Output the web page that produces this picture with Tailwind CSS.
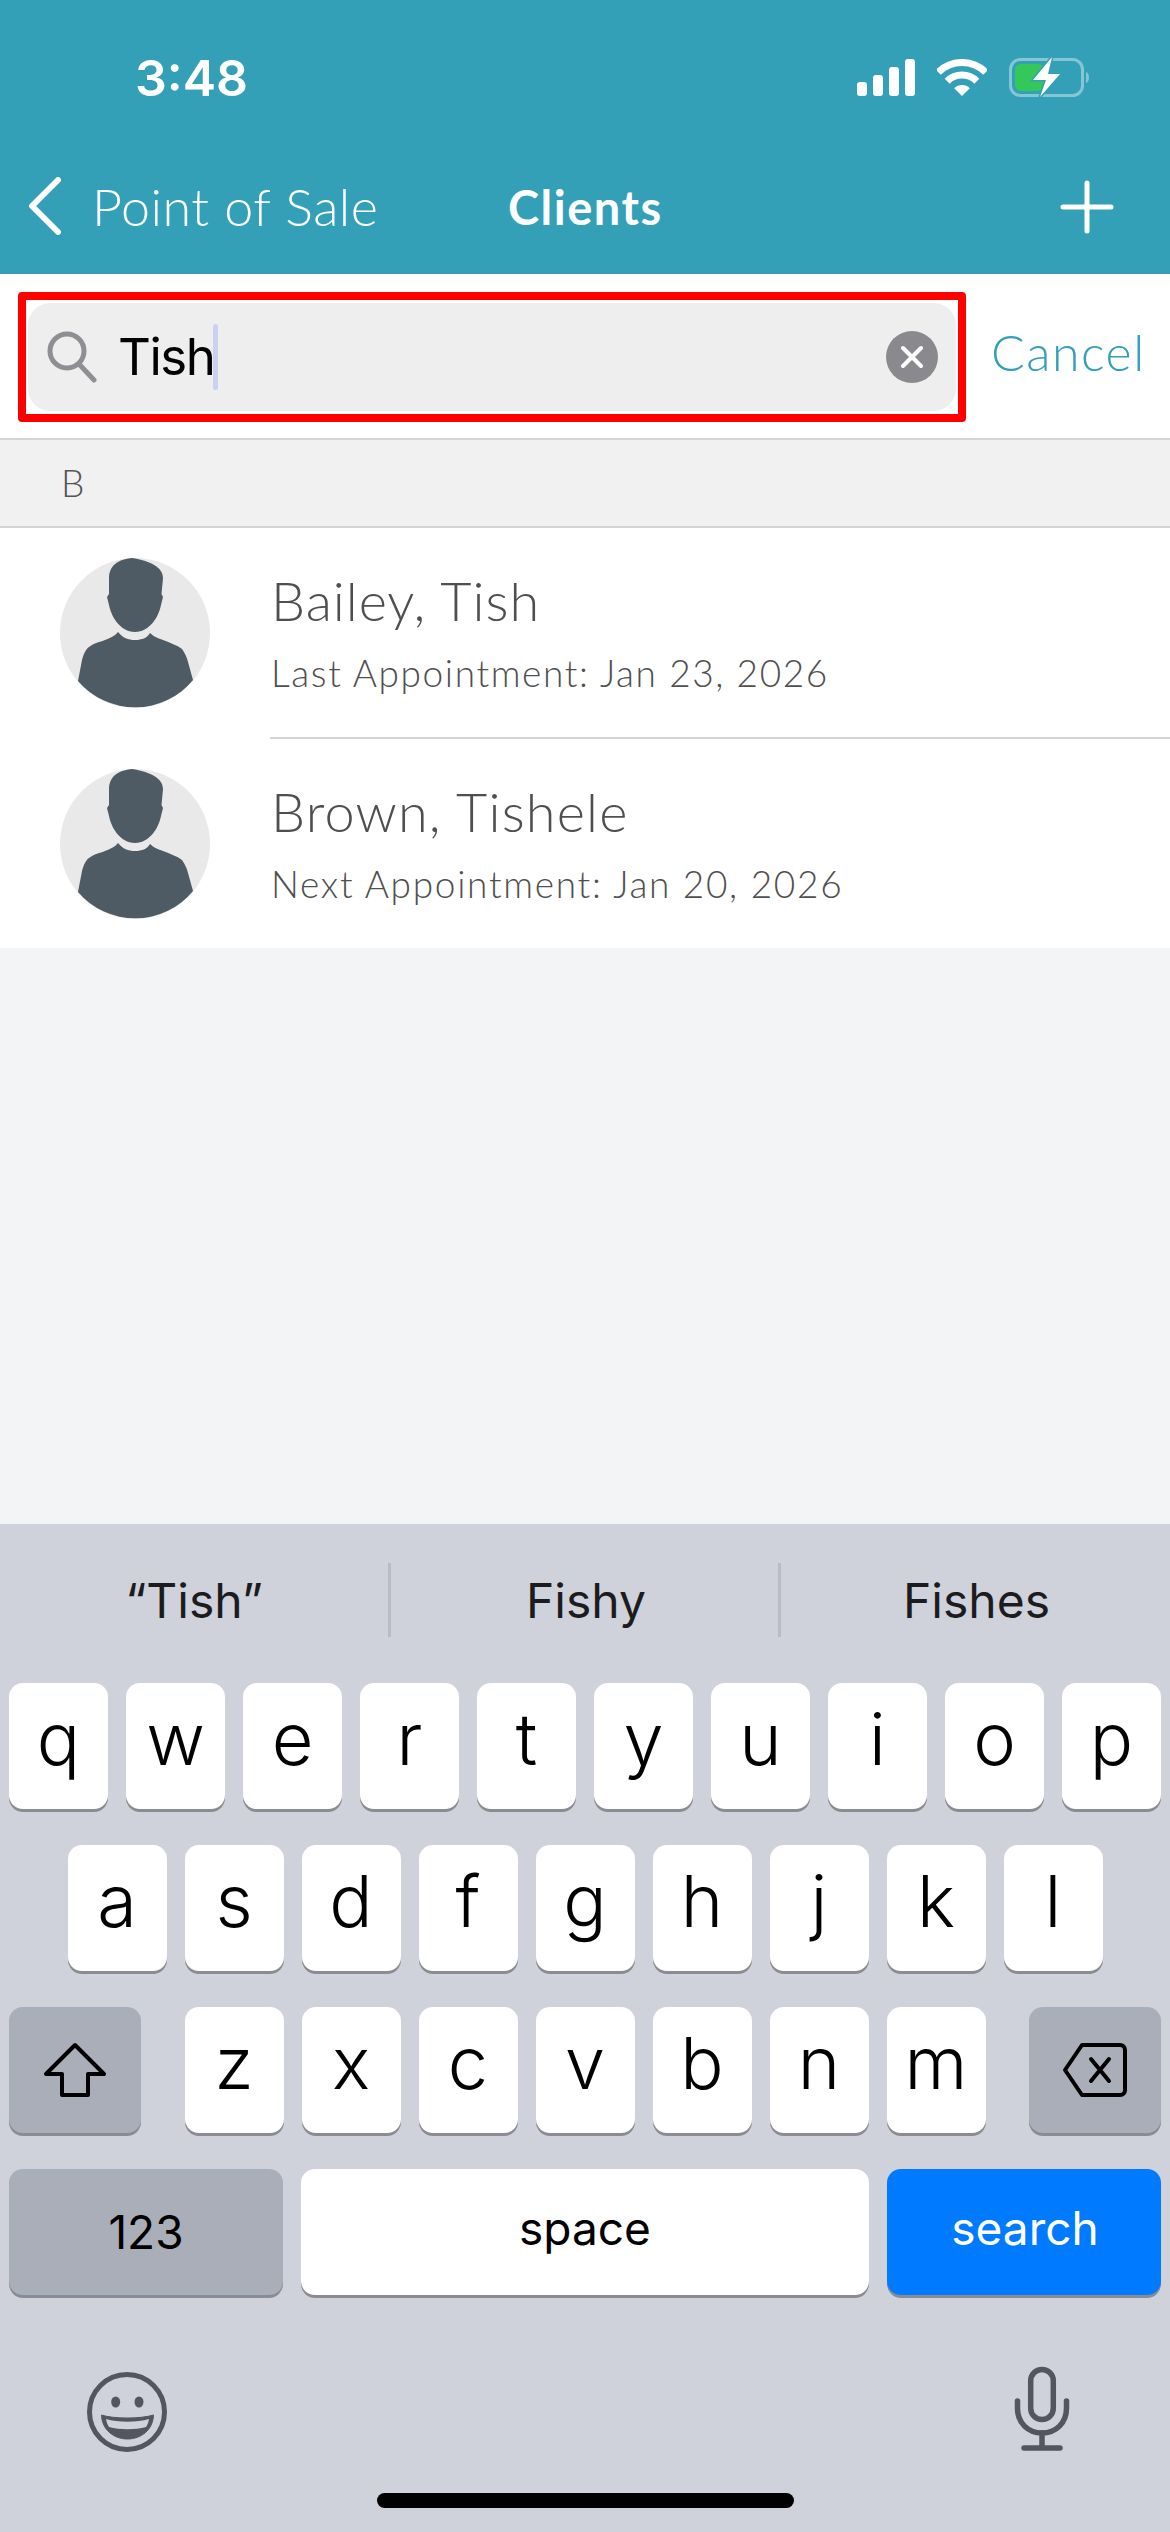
<!doctype html>
<html>
<head>
<meta charset="utf-8">
<script src="https://cdn.jsdelivr.net/npm/@tailwindcss/browser@4"></script>
</head>
<body class="m-0 bg-[#f3f4f6]">
<div class="relative w-[1170px] h-[2532px] flex flex-col overflow-hidden font-['Inter',sans-serif]">
  <!-- header -->
  <header class="relative h-[274px] shrink-0 bg-[#33a0b8] text-white">
    <div class="absolute left-[135px] top-[47px] text-[50px] leading-[62px] font-semibold font-['Inter']">3:48</div>
    <div class="absolute right-[79px] top-[57px] flex items-start gap-[22px]">
      <svg class="mt-[2px]" width="58" height="37" viewBox="0 0 58 37" fill="#fff"><rect x="0" y="23" width="10" height="14" rx="3"/><rect x="16" y="16" width="10" height="21" rx="3"/><rect x="32" y="8" width="10" height="29" rx="3"/><rect x="48" y="0" width="10" height="37" rx="3"/></svg>
      <svg class="mt-[2px]" width="50" height="37" viewBox="0 0 50 37" fill="none" stroke="#fff" stroke-width="7"><path d="M1.300 13.300 A33.500 33.500 0 0 1 48.700 13.300"/><path d="M10.200 22.200 A21 21 0 0 1 39.800 22.200"/><path d="M25 37 L17.200 29.200 A11 11 0 0 1 32.800 29.200 Z" fill="#fff" stroke="none"/></svg>
      <svg width="82" height="41" viewBox="0 0 82 41"><rect x="1.500" y="2.500" width="72" height="36" rx="10" fill="none" stroke="#ffffff" stroke-opacity=".4" stroke-width="3"/><rect x="6" y="7" width="29" height="27" rx="6" fill="#34c759"/><path d="M77 15 C81 16 81 25 77 26 Z" fill="#fff" fill-opacity=".4"/><path d="M43 0 L24 23 H37 L31 40 L51 17 H39 Z" fill="#fff" stroke="#33a0b8" stroke-width="3" paint-order="stroke"/></svg>
    </div>
    <div class="absolute left-[28px] right-[56px] top-[175px] h-[62px] flex items-center justify-between">
      <div class="flex items-center gap-[30px]">
        <svg width="34" height="58" viewBox="0 0 34 58" fill="none" stroke="#fff" stroke-width="6" stroke-linecap="round" stroke-linejoin="round"><path d="M30 3 L4 29 L30 55"/></svg>
        <span class="text-[52px] leading-[62px] tracking-[0.5px] font-light font-['Lato']">Point of Sale</span>
      </div>
      <svg class="mt-[2px]" width="54" height="54" viewBox="0 0 54 54" stroke="#fff" stroke-width="5" stroke-linecap="round"><path d="M27 3V51M3 27H51"/></svg>
    </div>
    <div class="absolute left-[508px] top-[176px] text-[47px] leading-[62px] tracking-[1.5px] font-bold font-['Lato']">Clients</div>
  </header>

  <!-- search -->
  <div class="h-[164px] shrink-0 bg-white flex pl-[18px] pt-[18px]">
    <div class="w-[948px] h-[130px] border-[8px] border-[#ff0000] rounded-[4px] px-[2px] py-[3px]">
      <div class="h-full bg-[#eeeeee] rounded-[22px] flex items-center pl-[19px] pr-[18px]">
        <svg width="50" height="52" viewBox="0 0 50 52" fill="none" stroke="#8e8e93" stroke-width="5" stroke-linecap="round"><circle cx="20" cy="20" r="17"/><path d="M32 33 L47 49"/></svg>
        <span class="ml-[21px] text-[51px] leading-[60px] tracking-[-1.500px] font-['Inter'] text-black">Tish</span>
        <span class="ml-[-1px] w-[5px] h-[66px] rounded-full bg-[#c9d2f3]"></span>
        <span class="ml-auto w-[52px] h-[52px] rounded-full bg-[#8a8a8e] flex items-center justify-center">
          <svg width="24" height="24" viewBox="0 0 24 24" stroke="#fff" stroke-width="4" stroke-linecap="round"><path d="M3 3L21 21M21 3L3 21"/></svg>
        </span>
      </div>
    </div>
    <span class="ml-[25px] mt-[31px] text-[#33a0b8] text-[50px] leading-[58px] tracking-[1.5px] font-light font-['Lato']">Cancel</span>
  </div>

  <!-- section -->
  <div class="h-[90px] shrink-0 bg-[#f1f1f1] border-y-2 border-[#d4d4d4] flex items-center pl-[61px] text-[#555] text-[37px] font-light font-['Lato']">B</div>

  <!-- rows -->
  <div class="bg-white h-[420px] shrink-0 flex flex-col">
    <div class="h-[209px] flex items-start">
      <svg class="ml-[60px] mt-[30px]" width="150" height="150" viewBox="0 0 150 150"><circle cx="75" cy="75" r="75" fill="#e9e9e9"/><path d="M72 0C62 1 49 5 49 20V36L47 39L49 47C51 58 60 74 75 74C90 74 99 58 101 47L103 39L101.500 36L103 20C103 9 90 3 72 0Z" fill="#4e5a64"/><path d="M58 74C63 80 68 82 75 82C82 82 87 80 90 75C94 79 98 80 103 82C110 85 117 87 122 91C125 95 127 100 128 104L133 122A75 75 0 0 1 18 123L22 102C24 95 26 91 29 89C34 85 40 84 45 82C50 80 55 78 58 74Z" fill="#4e5a64"/></svg>
      <div class="ml-[61px] mt-[42px] text-[#4f4f4f] font-light font-['Lato']">
        <div class="text-[54px] leading-[62px] tracking-[1px]">Bailey, Tish</div>
        <div class="mt-[19px] text-[37px] leading-[44px] tracking-[1.6px]">Last Appointment: Jan 23, 2026</div>
      </div>
    </div>
    <div class="ml-[270px] h-[2px] bg-[#d4d4d4]"></div>
    <div class="h-[209px] flex items-start">
      <svg class="ml-[60px] mt-[30px]" width="150" height="150" viewBox="0 0 150 150"><circle cx="75" cy="75" r="75" fill="#e9e9e9"/><path d="M72 0C62 1 49 5 49 20V36L47 39L49 47C51 58 60 74 75 74C90 74 99 58 101 47L103 39L101.500 36L103 20C103 9 90 3 72 0Z" fill="#4e5a64"/><path d="M58 74C63 80 68 82 75 82C82 82 87 80 90 75C94 79 98 80 103 82C110 85 117 87 122 91C125 95 127 100 128 104L133 122A75 75 0 0 1 18 123L22 102C24 95 26 91 29 89C34 85 40 84 45 82C50 80 55 78 58 74Z" fill="#4e5a64"/></svg>
      <div class="ml-[61px] mt-[42px] text-[#4f4f4f] font-light font-['Lato']">
        <div class="text-[54px] leading-[62px] tracking-[1.2px]">Brown, Tishele</div>
        <div class="mt-[19px] text-[37px] leading-[44px] tracking-[1.7px]">Next Appointment: Jan 20, 2026</div>
      </div>
    </div>
  </div>

  <div class="h-[576px] shrink-0"></div>

  <!-- keyboard -->
  <div class="relative flex-1 bg-[#cfd2da] font-['Inter'] text-black">
    <div class="h-[159px] flex items-start pt-[39px]">
      <div class="w-[388px] h-[74px] flex items-center justify-center pt-[2px] text-[48px] text-[#1c1c1e]">“Tish”</div>
      <div class="w-[3px] h-[74px] bg-[#b9bcc4]"></div>
      <div class="w-[387px] h-[74px] flex items-center justify-center pt-[2px] pl-[3px] text-[48px] text-[#1c1c1e]">Fishy</div>
      <div class="w-[3px] h-[74px] bg-[#b9bcc4]"></div>
      <div class="flex-1 h-[74px] flex items-center justify-center pt-[2px] pl-[2px] text-[48px] text-[#1c1c1e]">Fishes</div>
    </div>
    <div class="flex flex-col gap-[36px]">
      <div class="flex justify-center gap-[18px] h-[126px] text-[72px] font-[350]">
        <div class="w-[99px] bg-white rounded-[14px] shadow-[0_3px_0_#8b8c91] flex items-center justify-center pb-[14px]">q</div>
        <div class="w-[99px] bg-white rounded-[14px] shadow-[0_3px_0_#8b8c91] flex items-center justify-center pb-[14px]">w</div>
        <div class="w-[99px] bg-white rounded-[14px] shadow-[0_3px_0_#8b8c91] flex items-center justify-center pb-[14px]">e</div>
        <div class="w-[99px] bg-white rounded-[14px] shadow-[0_3px_0_#8b8c91] flex items-center justify-center pb-[14px]">r</div>
        <div class="w-[99px] bg-white rounded-[14px] shadow-[0_3px_0_#8b8c91] flex items-center justify-center pb-[14px]">t</div>
        <div class="w-[99px] bg-white rounded-[14px] shadow-[0_3px_0_#8b8c91] flex items-center justify-center pb-[14px]">y</div>
        <div class="w-[99px] bg-white rounded-[14px] shadow-[0_3px_0_#8b8c91] flex items-center justify-center pb-[14px]">u</div>
        <div class="w-[99px] bg-white rounded-[14px] shadow-[0_3px_0_#8b8c91] flex items-center justify-center pb-[14px]">i</div>
        <div class="w-[99px] bg-white rounded-[14px] shadow-[0_3px_0_#8b8c91] flex items-center justify-center pb-[14px]">o</div>
        <div class="w-[99px] bg-white rounded-[14px] shadow-[0_3px_0_#8b8c91] flex items-center justify-center pb-[14px]">p</div>
      </div>
      <div class="flex justify-center gap-[18px] h-[126px] text-[72px] font-[350]">
        <div class="w-[99px] bg-white rounded-[14px] shadow-[0_3px_0_#8b8c91] flex items-center justify-center pb-[14px]">a</div>
        <div class="w-[99px] bg-white rounded-[14px] shadow-[0_3px_0_#8b8c91] flex items-center justify-center pb-[14px]">s</div>
        <div class="w-[99px] bg-white rounded-[14px] shadow-[0_3px_0_#8b8c91] flex items-center justify-center pb-[14px]">d</div>
        <div class="w-[99px] bg-white rounded-[14px] shadow-[0_3px_0_#8b8c91] flex items-center justify-center pb-[14px]">f</div>
        <div class="w-[99px] bg-white rounded-[14px] shadow-[0_3px_0_#8b8c91] flex items-center justify-center pb-[14px]">g</div>
        <div class="w-[99px] bg-white rounded-[14px] shadow-[0_3px_0_#8b8c91] flex items-center justify-center pb-[14px]">h</div>
        <div class="w-[99px] bg-white rounded-[14px] shadow-[0_3px_0_#8b8c91] flex items-center justify-center pb-[14px]">j</div>
        <div class="w-[99px] bg-white rounded-[14px] shadow-[0_3px_0_#8b8c91] flex items-center justify-center pb-[14px]">k</div>
        <div class="w-[99px] bg-white rounded-[14px] shadow-[0_3px_0_#8b8c91] flex items-center justify-center pb-[14px]">l</div>
      </div>
      <div class="flex justify-between px-[9px] h-[126px] text-[72px] font-[350]">
        <div class="w-[132px] bg-[#a9aeb9] rounded-[14px] shadow-[0_3px_0_#8b8c91] flex items-center justify-center">
          <svg width="64" height="56" viewBox="0 0 64 56" fill="none" stroke="#000" stroke-width="4" stroke-linejoin="round"><path d="M32 3 L61 32 H45 V53 H19 V32 H3 Z"/></svg>
        </div>
        <div class="flex gap-[18px]">
          <div class="w-[99px] bg-white rounded-[14px] shadow-[0_3px_0_#8b8c91] flex items-center justify-center pb-[14px]">z</div>
          <div class="w-[99px] bg-white rounded-[14px] shadow-[0_3px_0_#8b8c91] flex items-center justify-center pb-[14px]">x</div>
          <div class="w-[99px] bg-white rounded-[14px] shadow-[0_3px_0_#8b8c91] flex items-center justify-center pb-[14px]">c</div>
          <div class="w-[99px] bg-white rounded-[14px] shadow-[0_3px_0_#8b8c91] flex items-center justify-center pb-[14px]">v</div>
          <div class="w-[99px] bg-white rounded-[14px] shadow-[0_3px_0_#8b8c91] flex items-center justify-center pb-[14px]">b</div>
          <div class="w-[99px] bg-white rounded-[14px] shadow-[0_3px_0_#8b8c91] flex items-center justify-center pb-[14px]">n</div>
          <div class="w-[99px] bg-white rounded-[14px] shadow-[0_3px_0_#8b8c91] flex items-center justify-center pb-[14px]">m</div>
        </div>
        <div class="w-[132px] bg-[#a9aeb9] rounded-[14px] shadow-[0_3px_0_#8b8c91] flex items-center justify-center">
          <svg width="66" height="56" viewBox="0 0 66 56" fill="none" stroke="#000" stroke-width="4" stroke-linejoin="round" stroke-linecap="round"><path d="M20 3 H58 C61 3 63 5 63 8 V48 C63 51 61 53 58 53 H20 L3 28 Z"/><path d="M29 17 L47 39 M47 17 L29 39"/></svg>
        </div>
      </div>
      <div class="flex justify-between px-[9px] h-[126px] text-[46px]">
        <div class="w-[274px] bg-[#a9aeb9] rounded-[14px] shadow-[0_3px_0_#8b8c91] flex items-center justify-center">123</div>
        <div class="w-[568px] bg-white rounded-[14px] shadow-[0_3px_0_#8b8c91] flex items-center justify-center pb-[8px]">space</div>
        <div class="w-[274px] bg-[#007aff] text-white rounded-[14px] shadow-[0_3px_0_#8b8c91] flex items-center justify-center pb-[8px] pl-[2px]">search</div>
      </div>
    </div>
    <div class="absolute left-[87px] top-[848px]">
      <svg width="80" height="80" viewBox="0 0 80 80" fill="none"><circle cx="40" cy="40" r="37.500" stroke="#53565f" stroke-width="5"/><ellipse cx="28.700" cy="30" rx="4.500" ry="5.500" fill="#53565f"/><ellipse cx="52" cy="30" rx="4.500" ry="5.500" fill="#53565f"/><path d="M14.500 43C26 47 54 47 66.500 43C66 58 54 67 40.500 67C27 67 15 58 14.500 43Z" fill="#53565f" stroke="#53565f" stroke-width="1" stroke-linejoin="round"/><path d="M19 47C31 50.500 50 50.500 62 47C61.500 50 60.500 53 59 55C48 58 33 58 22 55C20.500 53 19.500 50 19 47Z" fill="#cfd2da"/></svg>
    </div>
    <div class="absolute left-[1012px] top-[840px]">
      <svg width="60" height="88" viewBox="0 0 60 88" fill="none" stroke="#53565f" stroke-width="5.500" stroke-linecap="round"><rect x="18.700" y="5.500" width="22.600" height="50" rx="11.300"/><path d="M5.500 37V44C5.500 59 16 69 30 69C44 69 54.500 59 54.500 44V37"/><path d="M30 69V84M12 84H48"/></svg>
    </div>
    <div class="absolute left-[377px] top-[969px] w-[417px] h-[15px] rounded-full bg-black"></div>
  </div>
</div>
</body>
</html>
